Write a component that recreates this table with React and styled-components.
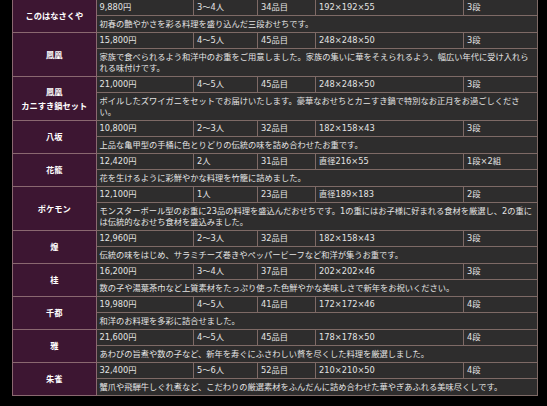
import React from "react";
import styled, { createGlobalStyle } from "styled-components";

const GlobalStyle = createGlobalStyle`
  html, body { margin: 0; padding: 0; background: #000; }
  body { font-family: "DejaVu Sans", "Noto Sans CJK JP", sans-serif; }
`;

const Page = styled.div`
  padding: 0 0 0 12px;
  overflow: hidden;
  height: 406px;
`;

const Table = styled.table`
  width: 525px;
  margin-top: -1px;
  border-collapse: collapse;
  table-layout: fixed;
  font-size: 8.25px;
  line-height: 11px;
`;

const Col = styled.col`
  width: ${(p) => p.$w}px;
`;

const Cell = styled.td`
  background: #2e2d2d;
  color: #e4e4e4;
  border: 1px solid #7e6a66;
  padding: 2px 3px;
  text-align: left;
  vertical-align: middle;
  white-space: nowrap;
  overflow: hidden;
`;

const DescCell = styled(Cell)`
  padding: 3px 3px 2px;
  white-space: normal;
  word-break: normal;
  line-break: strict;
`;

const NameCell = styled.th`
  background: #3d1632;
  color: #fff;
  border: 1px solid #8a6870;
  font-weight: 700;
  text-align: center;
  vertical-align: middle;
  line-height: 14px;
  padding: 0 2px;
`;

const items = [
  ["このはなさくや", "9,880円", "3～4人", "34品目", "192×192×55", "3段", "初春の艶やかさを彩る料理を盛り込んだ三段おせちです。"],
  ["鳳凰", "15,800円", "4～5人", "45品目", "248×248×50", "3段", "家族で食べられるよう和洋中のお重をご用意しました。家族の集いに華をそえられるよう、幅広い年代に受け入れられる味付けです。"],
  ["鳳凰\nカニすき鍋セット", "21,000円", "4～5人", "45品目", "248×248×50", "3段", "ボイルしたズワイガニをセットでお届けいたします。豪華なおせちとカニすき鍋で特別なお正月をお過ごしください。"],
  ["八坂", "10,800円", "2～3人", "32品目", "182×158×43", "3段", "上品な亀甲型の手桶に色とりどりの伝統の味を詰め合わせたお重です。"],
  ["花籠", "12,420円", "2人", "31品目", "直径216×55", "1段×2組", "花を生けるように彩鮮やかな料理を竹籠に詰めました。"],
  ["ポケモン", "12,100円", "1人", "23品目", "直径189×183", "2段", "モンスターボール型のお重に23品の料理を盛込んだおせちです。1の重にはお子様に好まれる食材を厳選し、2の重には伝統的なおせち食材を盛込みました。"],
  ["煌", "12,960円", "2～3人", "32品目", "182×158×43", "3段", "伝統の味をはじめ、サラミチーズ巻きやペッパービーフなど和洋が集うお重です。"],
  ["桂", "16,200円", "3～4人", "37品目", "202×202×46", "3段", "数の子や湯葉茶巾など上質素材をたっぷり使った色鮮やかな美味しさで新年をお祝いください。"],
  ["千都", "19,980円", "4～5人", "41品目", "172×172×46", "4段", "和洋のお料理を多彩に詰合せました。"],
  ["雅", "21,600円", "4～5人", "45品目", "178×178×50", "4段", "あわびの旨煮や数の子など、新年を寿ぐにふさわしい贅を尽くした料理を厳選しました。"],
  ["朱雀", "32,400円", "5～6人", "52品目", "210×210×50", "4段", "蟹爪や飛騨牛しぐれ煮など、こだわりの厳選素材をふんだんに詰め合わせた華やぎあふれる美味尽くしです。"],
];

const widths = [83.5, 97.5, 64, 58, 148, 74];

export default function App() {
  return (
    <>
      <GlobalStyle />
      <Page>
        <Table>
          <colgroup>
            {widths.map((w, i) => (
              <Col key={i} $w={w} />
            ))}
          </colgroup>
          <tbody>
            {items.map(([name, price, people, count, size, tiers, desc]) => (
              <React.Fragment key={name}>
                <tr>
                  <NameCell rowSpan={2}>
                    {name.split("\n").map((l, i) => (
                      <React.Fragment key={i}>
                        {i > 0 && <br />}
                        {l}
                      </React.Fragment>
                    ))}
                  </NameCell>
                  <Cell>{price}</Cell>
                  <Cell>{people}</Cell>
                  <Cell>{count}</Cell>
                  <Cell>{size}</Cell>
                  <Cell>{tiers}</Cell>
                </tr>
                <tr>
                  <DescCell colSpan={5}>{desc}</DescCell>
                </tr>
              </React.Fragment>
            ))}
          </tbody>
        </Table>
      </Page>
    </>
  );
}
